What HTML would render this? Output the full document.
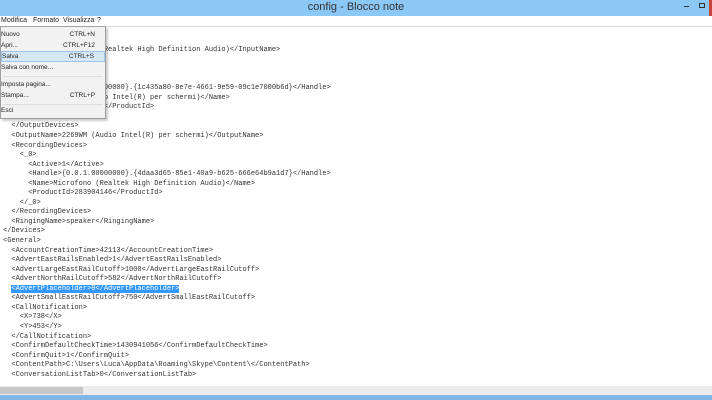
<!DOCTYPE html>
<html><head><meta charset="utf-8"><style>
*{margin:0;padding:0}
body{width:712px;height:400px;overflow:hidden;background:#fff;position:relative;font-family:"Liberation Sans",sans-serif}
#title{position:absolute;left:0;top:0;width:712px;height:16px;background:#8cc8f6}
#title .t{position:absolute;left:0;width:712px;text-align:center;top:1px;font-size:11px;color:#333}
#menu{position:absolute;top:16px;left:0;width:712px;height:10px;background:#fff;border-bottom:1px solid #d6dbe0;font-size:7px;color:#222}
#menu span{position:absolute;top:1px}
#text{position:absolute;left:3px;top:27px;font-family:"Liberation Mono",monospace;font-size:7px;line-height:9.55px;color:#333;white-space:pre}
.sel{background:#3399ff;color:#fff}
#dd{position:absolute;left:0;top:26px;width:104px;height:91px;background:#f2f2f2;border:1px solid #a0a0a0;box-shadow:2px 2px 2px rgba(0,0,0,.2);font-size:6.5px;color:#222}
#dd div{position:absolute;left:0;width:104px;height:11px;line-height:11px}
#dd b{font-weight:normal;position:absolute;right:10px}
#dd .h{background:#d6e8f8;border:1px solid #9ac6ee;box-sizing:border-box;line-height:9px}
#dd hr{position:absolute;left:2px;width:100px;border:0;border-top:1px solid #ddd}
#hs{position:absolute;left:0;top:386px;width:712px;height:9px;background:#ececec}
#hs i{position:absolute;left:0;top:1px;width:83px;height:7px;background:#c8c8c8}
#tb{position:absolute;left:0;top:395px;width:712px;height:5px;background:#7fb7e8}
</style></head><body>
<div id="title"><div class="t">config - Blocco note</div>
<div style="position:absolute;left:684px;top:6px;width:5px;height:1px;background:#333"></div>
<div style="position:absolute;left:699px;top:3px;width:4px;height:3px;border:1px solid #333"></div>
<div style="position:absolute;left:709px;top:0;width:3px;height:16px;background:#c7463b"></div>
</div>
<div id="menu"><span style="left:1px">Modifica</span><span style="left:33px">Formato</span><span style="left:63px">Visualizza</span><span style="left:97px">?</span></div>
<div id="text">&lt;Devices&gt;
  &lt;InputDevices&gt;
  &lt;InputName&gt;Microfono (Realtek High Definition Audio)&lt;/InputName&gt;
  &lt;OutputDevices&gt;
    &lt;_0&gt;
      &lt;Active&gt;1&lt;/Active&gt;
      &lt;Handle&gt;{0.0.0.00000000}.{1c435a80-8e7e-4661-9e59-09c1e7000b6d}&lt;/Handle&gt;
      &lt;Name&gt;2269WM (Audio Intel(R) per schermi)&lt;/Name&gt;
      &lt;ProductId&gt;2845419&lt;/ProductId&gt;
    &lt;/_0&gt;
  &lt;/OutputDevices&gt;
  &lt;OutputName&gt;2269WM (Audio Intel(R) per schermi)&lt;/OutputName&gt;
  &lt;RecordingDevices&gt;
    &lt;_0&gt;
      &lt;Active&gt;1&lt;/Active&gt;
      &lt;Handle&gt;{0.0.1.00000000}.{4daa3d65-85e1-40a9-b625-666e64b9a1d7}&lt;/Handle&gt;
      &lt;Name&gt;Microfono (Realtek High Definition Audio)&lt;/Name&gt;
      &lt;ProductId&gt;283904146&lt;/ProductId&gt;
    &lt;/_0&gt;
  &lt;/RecordingDevices&gt;
  &lt;RingingName&gt;speaker&lt;/RingingName&gt;
&lt;/Devices&gt;
&lt;General&gt;
  &lt;AccountCreationTime&gt;42113&lt;/AccountCreationTime&gt;
  &lt;AdvertEastRailsEnabled&gt;1&lt;/AdvertEastRailsEnabled&gt;
  &lt;AdvertLargeEastRailCutoff&gt;1000&lt;/AdvertLargeEastRailCutoff&gt;
  &lt;AdvertNorthRailCutoff&gt;582&lt;/AdvertNorthRailCutoff&gt;
  <span class="sel">&lt;AdvertPlaceholder&gt;0&lt;/AdvertPlaceholder&gt;</span>
  &lt;AdvertSmallEastRailCutoff&gt;750&lt;/AdvertSmallEastRailCutoff&gt;
  &lt;CallNotification&gt;
    &lt;X&gt;738&lt;/X&gt;
    &lt;Y&gt;453&lt;/Y&gt;
  &lt;/CallNotification&gt;
  &lt;ConfirmDefaultCheckTime&gt;1430941056&lt;/ConfirmDefaultCheckTime&gt;
  &lt;ConfirmQuit&gt;1&lt;/ConfirmQuit&gt;
  &lt;ContentPath&gt;C:\Users\Luca\AppData\Roaming\Skype\Content\&lt;/ContentPath&gt;
  &lt;ConversationListTab&gt;0&lt;/ConversationListTab&gt;</div>
<div id="dd">
<div style="top:2px">Nuovo<b>CTRL+N</b></div>
<div style="top:13px">Apri...<b>CTRL+F12</b></div>
<div class="h" style="top:24px">Salva<b>CTRL+S</b></div>
<div style="top:35px">Salva con nome...</div>
<hr style="top:49px">
<div style="top:52px">Imposta pagina...</div>
<div style="top:63px">Stampa...<b>CTRL+P</b></div>
<hr style="top:77px">
<div style="top:78px">Esci</div>
</div>
<div id="hs"><i></i></div>
<div id="tb"></div>
</body></html>
